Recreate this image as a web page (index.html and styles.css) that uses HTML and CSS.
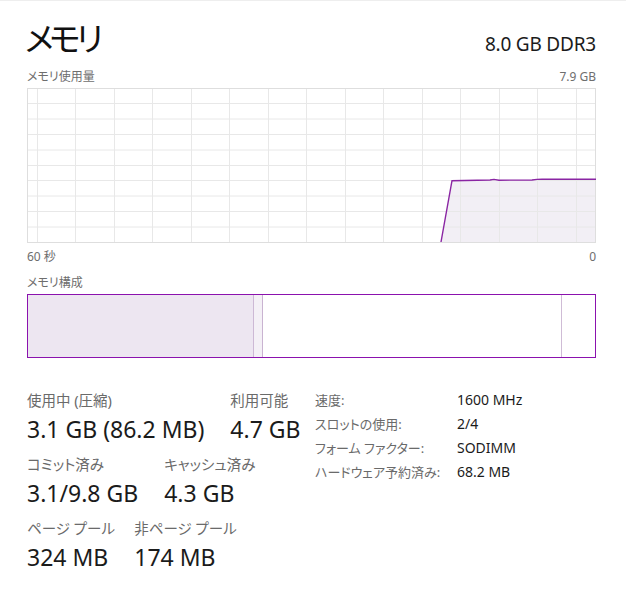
FILE: index.html
```html
<!DOCTYPE html>
<html lang="ja">
<head>
<meta charset="utf-8">
<title>メモリ</title>
<link rel="stylesheet" href="styles.css">
</head>
<body>
<div class="page">
  <header class="title-row">
    <h1 class="title">メモリ</h1>
    <div class="spec">8.0 GB DDR3</div>
  </header>

  <div class="axis-row axis-top">
    <span>メモリ使用量</span>
    <span>7.9 GB</span>
  </div>

  <div class="graph">
    <svg width="569" height="155" viewBox="0 0 569 155">
      <polygon class="area" points="414,154 425,92.7 463,92 467,91.4 472,92.2 505,92 510,91.4 515,91.2 568,91.2 568,154"/>
      <g class="grid">
        <path d="M10.5 0V155M48.5 0V155M87.5 0V155M125.5 0V155M164.5 0V155M202.5 0V155M241.5 0V155M279.5 0V155M318.5 0V155M356.5 0V155M395.5 0V155M433.5 0V155M472.5 0V155M510.5 0V155M549.5 0V155"/>
        <path d="M0 15.5H569M0 31H569M0 46.5H569M0 62H569M0 77.5H569M0 92.5H569M0 108H569M0 123.5H569M0 139H569"/>
      </g>
      <rect class="frame" x="0.5" y="0.5" width="568" height="154"/>
      <polyline class="line" points="414,154 425,92.7 463,92 467,91.4 472,92.2 505,92 510,91.4 515,91.2 569,91.2"/>
    </svg>
  </div>

  <div class="axis-row axis-bottom">
    <span>60 秒</span>
    <span>0</span>
  </div>

  <div class="section-label">メモリ構成</div>

  <div class="composition">
    <div class="seg seg-inuse" style="width:226px"></div>
    <div class="seg seg-modified" style="width:9px"></div>
    <div class="seg seg-standby" style="width:299px"></div>
    <div class="seg seg-free"></div>
  </div>

  <section class="stats">
    <div class="stats-main">
      <div class="stat-row">
        <div class="stat">
          <div class="stat-label">使用中 (圧縮)</div>
          <div class="stat-value">3.1 GB (86.2 MB)</div>
        </div>
        <div class="stat">
          <div class="stat-label">利用可能</div>
          <div class="stat-value">4.7 GB</div>
        </div>
      </div>
      <div class="stat-row">
        <div class="stat">
          <div class="stat-label">コミット済み</div>
          <div class="stat-value">3.1/9.8 GB</div>
        </div>
        <div class="stat">
          <div class="stat-label">キャッシュ済み</div>
          <div class="stat-value">4.3 GB</div>
        </div>
      </div>
      <div class="stat-row">
        <div class="stat">
          <div class="stat-label">ページ プール</div>
          <div class="stat-value">324 MB</div>
        </div>
        <div class="stat">
          <div class="stat-label">非ページ プール</div>
          <div class="stat-value">174 MB</div>
        </div>
      </div>
    </div>

    <dl class="props">
      <dt>速度:</dt><dd>1600 MHz</dd>
      <dt>スロットの使用:</dt><dd>2/4</dd>
      <dt>フォーム ファクター:</dt><dd>SODIMM</dd>
      <dt>ハードウェア予約済み:</dt><dd>68.2 MB</dd>
    </dl>
  </section>
</div>
</body>
</html>
```

FILE: styles.css
```css
html, body {
  margin: 0;
  padding: 0;
  background: #ffffff;
}

body {
  font-family: "Noto Sans", "Noto Sans CJK JP", sans-serif;
  font-feature-settings: "palt";
  color: #1b1b1b;
}

.page {
  border-top: 1px solid #eeeeee;
  padding: 0 30px 0 27px;
  width: 569px;
}

.title-row {
  display: flex;
  justify-content: space-between;
  align-items: baseline;
  padding-top: 14px;
  height: 48px;
}

.title {
  margin: 0 0 0 -2px;
  font-size: 33px;
  font-weight: 400;
  line-height: 48px;
  letter-spacing: -4.5px;
  color: #111111;
}

.spec {
  font-size: 19px;
  line-height: 24px;
  color: #1b1b1b;
  letter-spacing: -0.2px;
}

.axis-row {
  display: flex;
  justify-content: space-between;
  font-size: 12px;
  line-height: 18px;
  color: #6e6e6e;
}

.axis-top {
  height: 20px;
  margin-top: 5px;
}

.axis-bottom {
  height: 18px;
  margin-top: 5px;
}

.graph svg {
  display: block;
}

.graph .area {
  fill: #f2eff5;
}

.graph .grid path {
  stroke: #e8e8e8;
  stroke-width: 1;
  fill: none;
}

.graph .frame {
  fill: none;
  stroke: #dedede;
  stroke-width: 1;
}

.graph .line {
  fill: none;
  stroke: #8a25a3;
  stroke-width: 1.4;
}

.section-label {
  margin-top: 8px;
  font-size: 12px;
  line-height: 18px;
  color: #6e6e6e;
}

.composition {
  margin-top: 2px;
  height: 62px;
  border: 1px solid #8b12ae;
  display: flex;
}

.seg {
  height: 100%;
  box-sizing: border-box;
}

.seg-inuse {
  background: #ede6f1;
  border-right: 1px solid #cdb9d5;
}

.seg-modified {
  background: #f4f0f6;
  border-right: 1px solid #c9b3d1;
}

.seg-standby {
  background: #ffffff;
  border-right: 1px solid #cfbcd6;
}

.seg-free {
  flex: 1;
  background: #ffffff;
}

.stats {
  display: flex;
  margin-top: 33px;
}

.stats-main {
  width: 288px;
  display: flex;
  flex-direction: column;
  gap: 9px;
}

.stat-row {
  display: flex;
  gap: 26px;
}

.stat-label {
  width: 0;
  white-space: nowrap;
  font-size: 14.5px;
  line-height: 19px;
  color: #6a6a6a;
}

.stat-value {
  margin-top: 2px;
  font-size: 23px;
  line-height: 34px;
  color: #1b1b1b;
}

.props {
  margin: -4px 0 0 0;
  display: grid;
  grid-template-columns: 142px auto;
  grid-auto-rows: 24px;
  align-items: center;
  font-size: 13px;
  align-self: flex-start;
}

.props dt {
  color: #6a6a6a;
}

.props dd {
  margin: 0;
  font-size: 14px;
  color: #1b1b1b;
}
```
